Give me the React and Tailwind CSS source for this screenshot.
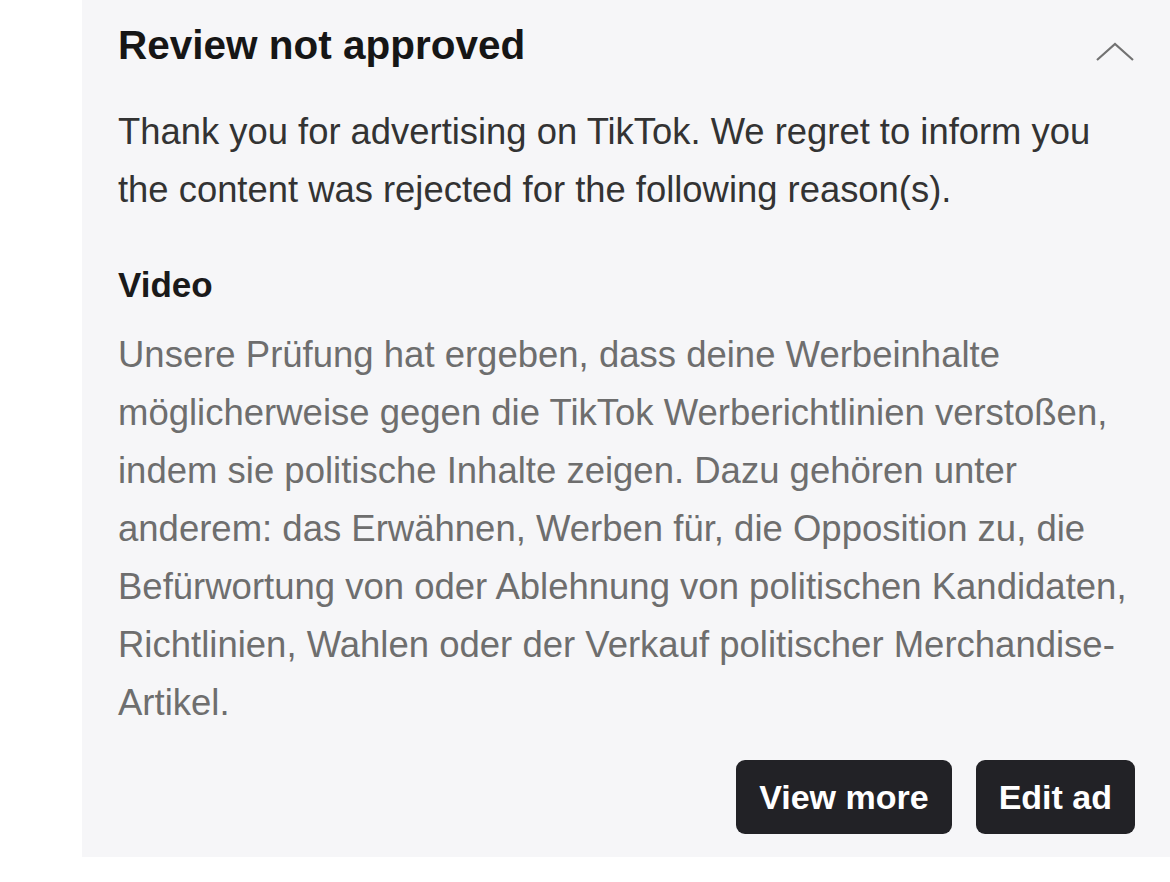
export default function App() {
  return (
    <div className="w-full h-[882px] bg-white pl-[82px] overflow-hidden" style={{ fontFamily: '"Liberation Sans", Arial, sans-serif' }}>
      <div className="h-[857px] bg-[#f6f6f8] pl-[36px] pr-[35px] pt-[17px]">
        <div className="flex items-center justify-between h-[56px]">
          <h1 className="text-[40.5px] leading-[56px] font-bold text-[#161616]">Review not approved</h1>
          <svg width="40" height="22" viewBox="0 0 40 22" className="mt-[14px]" fill="none">
            <polyline points="2,19 20,3 38,19" stroke="#727272" strokeWidth="2.2" />
          </svg>
        </div>
        <p className="mt-[30px] text-[36.4px] leading-[58px] text-[#333333]">
          Thank you for advertising on TikTok. We regret to inform you the content was rejected for the following reason(s).
        </p>
        <h2 className="mt-[37px] text-[35px] leading-[58px] font-bold text-[#1a1a1a]">Video</h2>
        <p className="mt-[12px] text-[36.5px] leading-[58px] text-[#6e6e6e]">
          Unsere Prüfung hat ergeben, dass deine Werbeinhalte möglicherweise gegen die TikTok Werberichtlinien verstoßen, indem sie politische Inhalte zeigen. Dazu gehören unter anderem: das Erwähnen, Werben für, die Opposition zu, die Befürwortung von oder Ablehnung von politischen Kandidaten, Richtlinien, Wahlen oder der Verkauf politischer Merchandise-Artikel.
        </p>
        <div className="mt-[28px] flex justify-end gap-[24px]">
          <button className="h-[74px] px-[23px] rounded-[9px] bg-[#222226] text-white text-[34px] font-bold">View more</button>
          <button className="h-[74px] px-[23px] rounded-[9px] bg-[#222226] text-white text-[34px] font-bold">Edit ad</button>
        </div>
      </div>
    </div>
  );
}
